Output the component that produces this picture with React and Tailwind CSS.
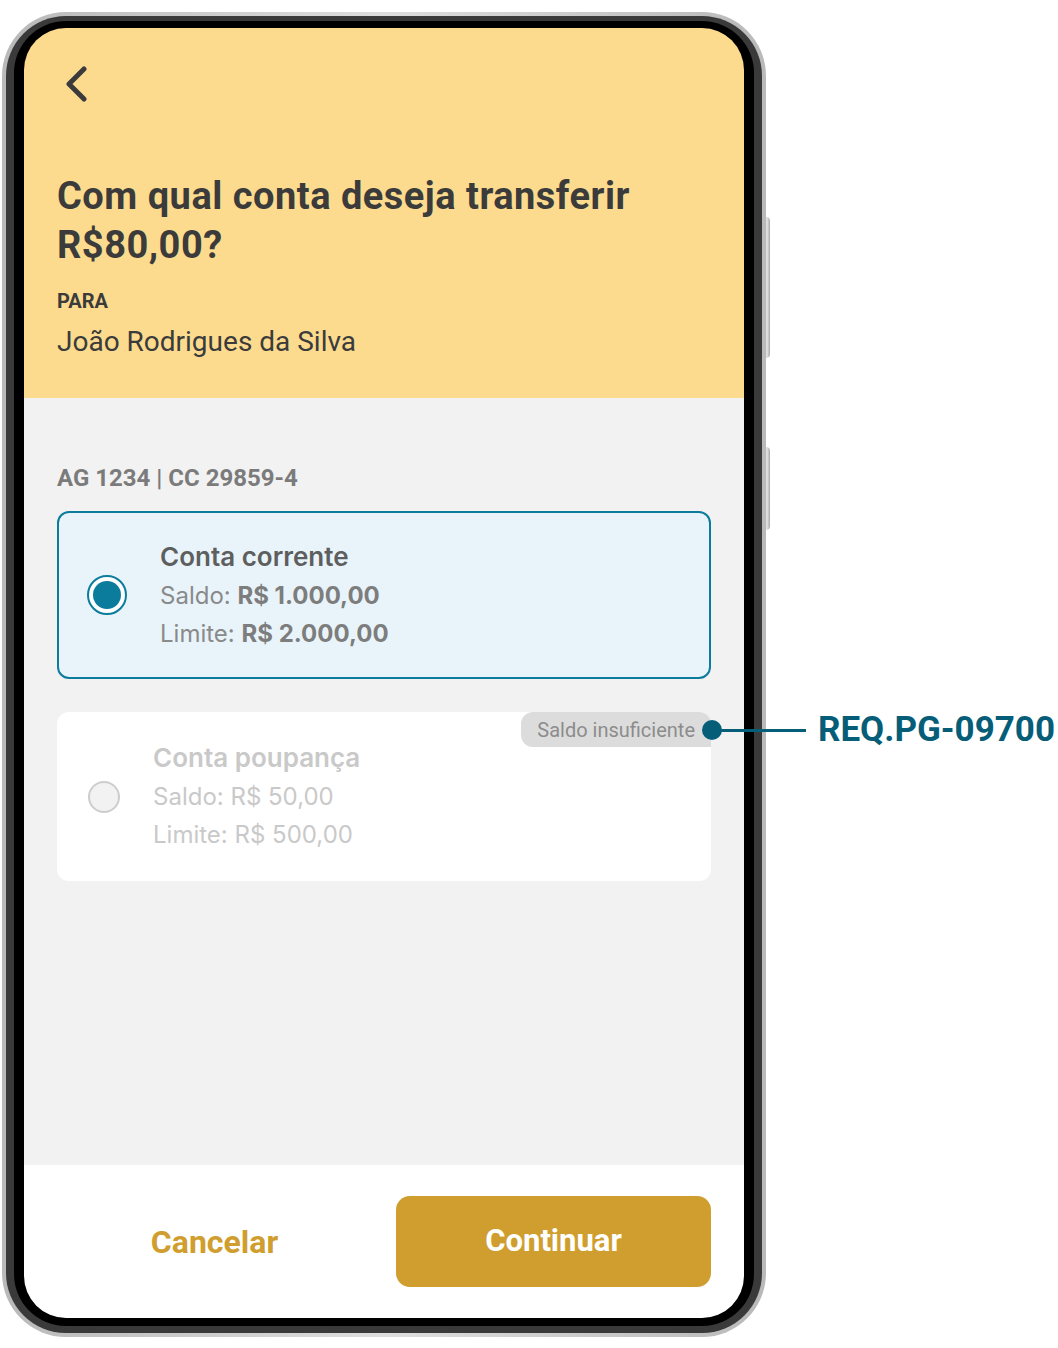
import React from 'react';

function Radio({ checked }) {
  if (checked) {
    return <div className="w-[40px] h-[40px] rounded-full border-[2.5px] border-[#0b7c9b] bg-white flex items-center justify-center shrink-0">
        <div className="w-[28px] h-[28px] rounded-full bg-[#0b7c9b]" />
      </div>;
  }
  return <div className="w-[32px] h-[32px] rounded-full border-[2px] border-[#cdcdcd] bg-[#f2f2f2] shrink-0" />;
}

function AccountCard({ selected, title, saldo, limite, badge }) {
  return <div className={selected ? "relative h-[168px] rounded-[12px] border-2 border-[#0b7c9b] bg-[#e8f4fa] flex items-center pl-[28px]" : "relative h-[169px] rounded-[12px] bg-white flex items-center pl-[31px] mt-[33px]"}>
      <Radio checked={selected} />
      <div className={selected ? "ml-[33px] font-['Inter',sans-serif] text-[#8a8a8a]" : "ml-[33px] font-['Inter',sans-serif] text-[#c9c9c9]"}>
        <div className={selected ? "text-[26px] leading-[38px] font-semibold text-[#5e5e5e]" : "text-[26px] leading-[38px] font-semibold"}>{title}</div>
        <div className="text-[24px] leading-[39px]">
          Saldo: <span className={selected ? "font-bold text-[#7d7d7d]" : ""}>{saldo}</span>
        </div>
        <div className="text-[24px] leading-[38px]">
          Limite: <span className={selected ? "font-bold text-[#7d7d7d]" : ""}>{limite}</span>
        </div>
      </div>
      {badge && <div className="absolute top-0 right-0 h-[35px] pl-[16px] pr-[16px] rounded-tl-[12px] rounded-bl-[12px] rounded-tr-[12px] bg-[#dcdcdc] flex items-center font-['Roboto',sans-serif] text-[20px] text-[#8c8c8c]">
          {badge}
        </div>}
    </div>;
}

export default function App() {
  return <div className="relative w-[1058px] h-[1348px] bg-white pl-[2px] pt-[12px] font-['Roboto',sans-serif]">
      <div className="relative w-[764px] h-[1325px]">
        {/* side buttons */}
        <div className="absolute left-[762px] top-[205px] w-[6px] h-[141px] rounded-r-[4px] bg-gradient-to-r from-[#bdbdbd] via-[#e6e6e6] to-[#a8a8a8]" />
        <div className="absolute left-[762px] top-[435px] w-[6px] h-[83px] rounded-r-[4px] bg-gradient-to-r from-[#bdbdbd] via-[#e6e6e6] to-[#a8a8a8]" />

        <div className="relative h-full rounded-[64px] bg-gradient-to-r from-[#b9b9b9] via-[#dedede] to-[#b9b9b9] p-[4px]">
          <div className="h-full rounded-[60px] bg-[#3a3a3a] px-[8px] pt-[5px] pb-[7px]">
            <div className="h-full rounded-[52px] bg-black px-[10px] pt-[7px] pb-[8px]">
              <div className="h-full rounded-[42px] overflow-hidden flex flex-col">
                {/* header */}
                <div className="h-[370px] shrink-0 bg-[#fcdb8e] px-[33px] pt-[38px] text-[#3b3b3b]">
                  <svg width="24" height="36" viewBox="0 0 24 36" className="ml-[8px]">
                    <polyline points="19,3 4,18 19,33" fill="none" stroke="#3b3b3b" strokeWidth="5" strokeLinecap="round" strokeLinejoin="round" />
                  </svg>
                  <h1 className="mt-[70px] text-[38px] leading-[49px] font-bold tracking-[0.5px]">
                    Com qual conta deseja transferir<br />R$80,00?
                  </h1>
                  <div className="mt-[19px] text-[20px] leading-[24px] font-bold">PARA</div>
                  <div className="mt-[12px] text-[28px] leading-[34px]">João Rodrigues da Silva</div>
                </div>

                {/* body */}
                <div className="flex-1 bg-[#f2f2f2] px-[33px] pt-[66px]">
                  <div className="text-[24px] leading-[28px] font-bold text-[#7b7b7b]">AG 1234 | CC 29859-4</div>
                  <div className="mt-[19px]">
                    <AccountCard selected title="Conta corrente" saldo="R$ 1.000,00" limite="R$ 2.000,00" />
                    <AccountCard title="Conta poupança" saldo="R$ 50,00" limite="R$ 500,00" badge="Saldo insuficiente" />
                  </div>
                </div>

                {/* footer */}
                <div className="h-[153px] shrink-0 bg-white px-[33px] pt-[31px] grid grid-cols-2 gap-[24px]">
                  <button className="h-[91px] flex items-center justify-center text-[32px] font-bold text-[#cf9e2e]">Cancelar</button>
                  <button className="h-[91px] rounded-[14px] bg-[#cf9e2e] flex items-center justify-center text-[31px] font-bold text-white">Continuar</button>
                </div>
              </div>
            </div>
          </div>
        </div>
      </div>

      {/* requirement annotation */}
      <div className="absolute left-[702px] top-[715px] flex items-center">
        <div className="w-[20px] h-[20px] rounded-full bg-[#065d78]" />
        <div className="w-[86px] h-[3px] -ml-[2px] bg-[#065d78]" />
        <div className="ml-[12px] text-[35px] leading-[30px] font-bold text-[#065d78]">REQ.PG-09700</div>
      </div>
    </div>;
}
